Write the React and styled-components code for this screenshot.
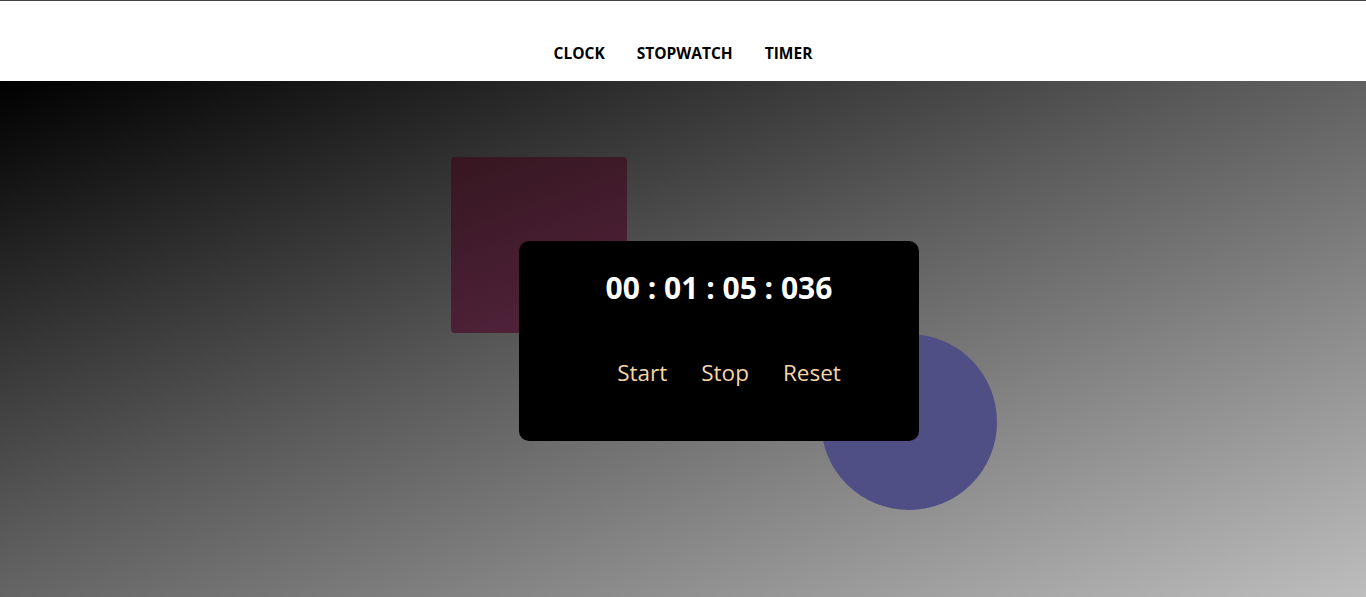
import React, { useState } from 'react';
import styled, { createGlobalStyle } from 'styled-components';

const GlobalStyle = createGlobalStyle`
  * { box-sizing: border-box; }
  html, body { margin: 0; padding: 0; }
  body {
    font-family: 'Open Sans', 'Noto Sans', sans-serif;
    background: #fff;
  }
`;

export default function App() {
  const [tiempo] = useState({ h: '00', m: '01', s: '05', ms: '036' });
  const links = ['CLOCK', 'STOPWATCH', 'TIMER'];
  const botones = ['Start', 'Stop', 'Reset'];

  return (
    <>
      <GlobalStyle />
      <Header>
        <Nav>
          {links.map((l) => (
            <NavLink key={l}>{l}</NavLink>
          ))}
        </Nav>
      </Header>
      <Main>
        <Escena>
          <Cuadro />
          <Circulo />
          <Tarjeta>
            <Tiempo>
              {tiempo.h} : {tiempo.m} : {tiempo.s} : {tiempo.ms}
            </Tiempo>
            <Botones>
              {botones.map((b) => (
                <Boton key={b}>{b}</Boton>
              ))}
            </Botones>
          </Tarjeta>
        </Escena>
      </Main>
    </>
  );
}

const Header = styled.header`
  height: 81px;
  border-top: 1px solid #444;
  background: #fff;
  display: flex;
  align-items: flex-end;
  justify-content: center;
  padding-bottom: 18px;
`;

const Nav = styled.nav`
  display: flex;
  gap: 32px;
`;

const NavLink = styled.a`
  font-size: 15.5px;
  font-weight: 700;
  color: #000;
  text-decoration: none;
  cursor: pointer;
  line-height: 20px;
`;

const Main = styled.main`
  height: 516px;
  background: linear-gradient(160deg, #000 0%, #5a5a5a 45%, #bdbdbd 100%);
  display: flex;
  align-items: center;
  justify-content: center;
  overflow: hidden;
  padding: 3px 0 0 72px;
`;

const Escena = styled.div`
  position: relative;
  width: 400px;
  height: 200px;
`;

const Cuadro = styled.div`
  position: absolute;
  left: -68px;
  top: -84px;
  width: 176px;
  height: 176px;
  border-radius: 4px;
  background: linear-gradient(160deg, #36141f, #531f3a);
  opacity: 0.92;
`;

const Circulo = styled.div`
  position: absolute;
  left: 302px;
  top: 93px;
  width: 176px;
  height: 176px;
  border-radius: 50%;
  background: #4f4f85;
`;

const Tarjeta = styled.div`
  position: relative;
  width: 400px;
  height: 200px;
  background: #000;
  border-radius: 10px;
  display: flex;
  flex-direction: column;
  align-items: center;
  padding-top: 27px;
`;

const Tiempo = styled.div`
  color: #fff;
  font-size: 30px;
  font-weight: 700;
  line-height: 40px;
`;

const Botones = styled.div`
  display: flex;
  gap: 26px;
  margin-top: 50px;
  padding-left: 20px;
`;

const Boton = styled.button`
  background: none;
  border: none;
  color: #f6d6a6;
  font-family: inherit;
  font-size: 22.5px;
  line-height: 30px;
  padding: 0 4px;
  cursor: pointer;
`;
